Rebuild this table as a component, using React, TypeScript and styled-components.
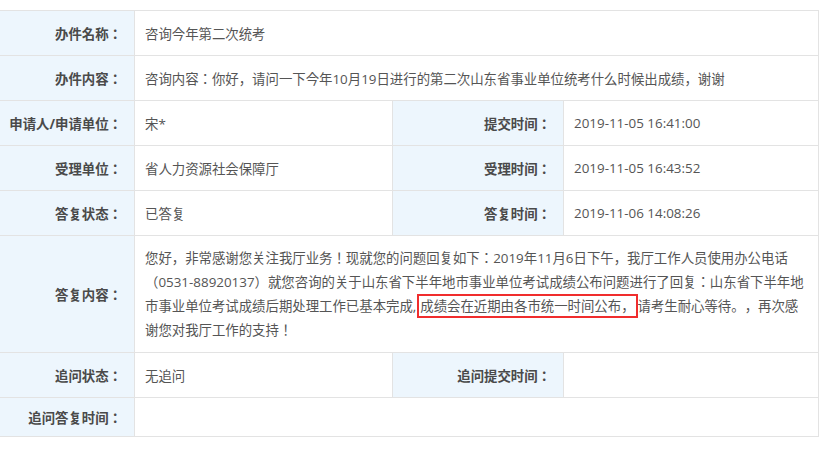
import styled, { createGlobalStyle } from "styled-components";

const GlobalStyle = createGlobalStyle`
  html, body {
    margin: 0;
    padding: 0;
    background: #fff;
  }
  body {
    font-family: "Open Sans", "Noto Sans CJK JP", "Noto Sans CJK SC", sans-serif;
    text-spacing-trim: space-all;
    font-feature-settings: "chws" 0, "halt" 0;
  }
`;

const Page = styled.div`
  padding-top: 10px;
`;

const Table = styled.table`
  border-collapse: collapse;
  table-layout: fixed;
  width: 819px;
  margin-left: -1px;
  font-size: 13.4px;
  color: #555;
`;

const Row = styled.tr<{ $h?: number }>`
  height: ${(p) => p.$h ?? 45}px;
`;

const Label = styled.th`
  background: #edf6fd;
  border: 1px solid #e3e3e3;
  text-align: right;
  font-weight: bold;
  color: #4a4a4a;
  padding: 0 12px 0 0;
  white-space: nowrap;
`;

const Value = styled.td`
  border: 1px solid #e3e3e3;
  padding: 0 10px;
  text-align: left;
  vertical-align: middle;
`;

const Reply = styled(Value)`
  line-height: 24px;
  padding: 10px 9px 10px 10px;
`;

const Mark = styled.span`
  border: 2px solid #f02d2d;
  margin-left: 1px;
  padding: 1px 1px;
`;

export default function App() {
  return (
    <>
      <GlobalStyle />
      <Page>
        <Table>
          <colgroup>
            <col style={{ width: 135 }} />
            <col style={{ width: 258 }} />
            <col style={{ width: 171 }} />
            <col style={{ width: 255 }} />
          </colgroup>
          <tbody>
            <Row>
              <Label>办件名称：</Label>
              <Value colSpan={3}>咨询今年第二次统考</Value>
            </Row>
            <Row>
              <Label>办件内容：</Label>
              <Value colSpan={3}>
                咨询内容：你好，请问一下今年10月19日进行的第二次山东省事业单位统考什么时候出成绩，谢谢
              </Value>
            </Row>
            <Row>
              <Label>申请人/申请单位：</Label>
              <Value>宋*</Value>
              <Label>提交时间：</Label>
              <Value>2019-11-05 16:41:00</Value>
            </Row>
            <Row>
              <Label>受理单位：</Label>
              <Value>省人力资源社会保障厅</Value>
              <Label>受理时间：</Label>
              <Value>2019-11-05 16:43:52</Value>
            </Row>
            <Row>
              <Label>答复状态：</Label>
              <Value>已答复</Value>
              <Label>答复时间：</Label>
              <Value>2019-11-06 14:08:26</Value>
            </Row>
            <Row $h={117}>
              <Label>答复内容：</Label>
              <Reply colSpan={3}>
                您好，非常感谢您关注我厅业务！现就您的问题回复如下：2019年11月6日下午，我厅工作人员使用办公电话（0531-88920137）就您咨询的关于山东省下半年地市事业单位考试成绩公布问题进行了回复：山东省下半年地市事业单位考试成绩后期处理工作已基本完成,<Mark>成绩会在近期由各市统一时间公布，</Mark>请考生耐心等待。，再次感谢您对我厅工作的支持！
              </Reply>
            </Row>
            <Row>
              <Label>追问状态：</Label>
              <Value>无追问</Value>
              <Label>追问提交时间：</Label>
              <Value></Value>
            </Row>
            <Row $h={39}>
              <Label>追问答复时间：</Label>
              <Value colSpan={3}></Value>
            </Row>
          </tbody>
        </Table>
      </Page>
    </>
  );
}
